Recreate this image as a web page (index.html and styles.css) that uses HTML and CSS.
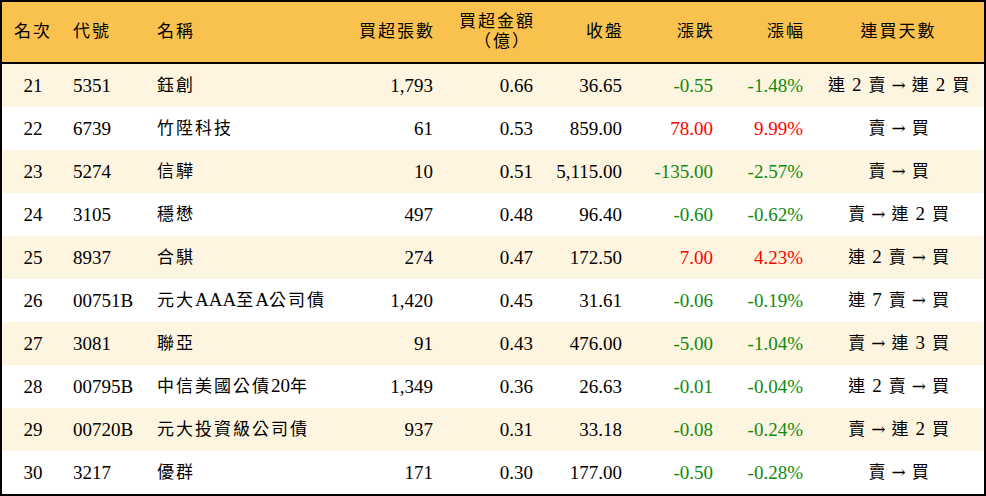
FILE: index.html
```html
<!DOCTYPE html>
<html lang="zh-Hant">
<head>
<meta charset="utf-8">
<title>買超排行</title>
<link rel="stylesheet" href="styles.css">
</head>
<body>
<table class="rank">
  <colgroup>
    <col class="c-rank"><col class="c-code"><col class="c-name"><col class="c-vol"><col class="c-amt"><col class="c-close"><col class="c-chg"><col class="c-pct"><col class="c-days">
  </colgroup>
  <thead>
    <tr>
      <th class="ctr zh">名次</th>
      <th class="lft zh">代號</th>
      <th class="lft zh nm">名稱</th>
      <th class="rgt zh">買超張數</th>
      <th class="rgt zh two"><span class="ln">買超金額</span><span class="ln unit">（億）</span></th>
      <th class="rgt zh">收盤</th>
      <th class="rgt zh">漲跌</th>
      <th class="rgt zh">漲幅</th>
      <th class="ctr zh">連買天數</th>
    </tr>
  </thead>
  <tbody>
    <tr class="alt"><td class="ctr">21</td><td class="lft">5351</td><td class="lft zh nm">鈺創</td><td class="rgt">1,793</td><td class="rgt">0.66</td><td class="rgt">36.65</td><td class="rgt dn">-0.55</td><td class="rgt dn">-1.48%</td><td class="ctr zh days">連<span class="n">2</span>賣<span class="n ar">→</span>連<span class="n">2</span>買</td></tr>
    <tr><td class="ctr">22</td><td class="lft">6739</td><td class="lft zh nm">竹陞科技</td><td class="rgt">61</td><td class="rgt">0.53</td><td class="rgt">859.00</td><td class="rgt up">78.00</td><td class="rgt up">9.99%</td><td class="ctr zh days">賣<span class="n ar">→</span>買</td></tr>
    <tr class="alt"><td class="ctr">23</td><td class="lft">5274</td><td class="lft zh nm">信驊</td><td class="rgt">10</td><td class="rgt">0.51</td><td class="rgt">5,115.00</td><td class="rgt dn">-135.00</td><td class="rgt dn">-2.57%</td><td class="ctr zh days">賣<span class="n ar">→</span>買</td></tr>
    <tr><td class="ctr">24</td><td class="lft">3105</td><td class="lft zh nm">穩懋</td><td class="rgt">497</td><td class="rgt">0.48</td><td class="rgt">96.40</td><td class="rgt dn">-0.60</td><td class="rgt dn">-0.62%</td><td class="ctr zh days">賣<span class="n ar">→</span>連<span class="n">2</span>買</td></tr>
    <tr class="alt"><td class="ctr">25</td><td class="lft">8937</td><td class="lft zh nm">合騏</td><td class="rgt">274</td><td class="rgt">0.47</td><td class="rgt">172.50</td><td class="rgt up">7.00</td><td class="rgt up">4.23%</td><td class="ctr zh days">連<span class="n">2</span>賣<span class="n ar">→</span>買</td></tr>
    <tr><td class="ctr">26</td><td class="lft">00751B</td><td class="lft zh nm">元大<span class="lat">AAA</span>至<span class="lat">A</span>公司債</td><td class="rgt">1,420</td><td class="rgt">0.45</td><td class="rgt">31.61</td><td class="rgt dn">-0.06</td><td class="rgt dn">-0.19%</td><td class="ctr zh days">連<span class="n">7</span>賣<span class="n ar">→</span>買</td></tr>
    <tr class="alt"><td class="ctr">27</td><td class="lft">3081</td><td class="lft zh nm">聯亞</td><td class="rgt">91</td><td class="rgt">0.43</td><td class="rgt">476.00</td><td class="rgt dn">-5.00</td><td class="rgt dn">-1.04%</td><td class="ctr zh days">賣<span class="n ar">→</span>連<span class="n">3</span>買</td></tr>
    <tr><td class="ctr">28</td><td class="lft">00795B</td><td class="lft zh nm">中信美國公債<span class="lat">20</span>年</td><td class="rgt">1,349</td><td class="rgt">0.36</td><td class="rgt">26.63</td><td class="rgt dn">-0.01</td><td class="rgt dn">-0.04%</td><td class="ctr zh days">連<span class="n">2</span>賣<span class="n ar">→</span>買</td></tr>
    <tr class="alt"><td class="ctr">29</td><td class="lft">00720B</td><td class="lft zh nm">元大投資級公司債</td><td class="rgt">937</td><td class="rgt">0.31</td><td class="rgt">33.18</td><td class="rgt dn">-0.08</td><td class="rgt dn">-0.24%</td><td class="ctr zh days">賣<span class="n ar">→</span>連<span class="n">2</span>買</td></tr>
    <tr><td class="ctr">30</td><td class="lft">3217</td><td class="lft zh nm">優群</td><td class="rgt">171</td><td class="rgt">0.30</td><td class="rgt">177.00</td><td class="rgt dn">-0.50</td><td class="rgt dn">-0.28%</td><td class="ctr zh days">賣<span class="n ar">→</span>買</td></tr>
  </tbody>
</table>
</body>
</html>
```
FILE: styles.css
```css
html, body {
  margin: 0;
  padding: 0;
  background: #ffffff;
}

.rank {
  width: 986px;
  table-layout: fixed;
  border-collapse: separate;
  border-spacing: 0;
  border: 2px solid #000;
  font-family: "Liberation Serif", "Noto Sans CJK TC", serif;
  font-size: 19px;
  color: #000;
}

.c-rank { width: 62px; }
.c-code { width: 86px; }
.c-name { width: 195px; }
.c-vol { width: 98px; }
.c-amt { width: 100px; }
.c-close { width: 89px; }
.c-chg { width: 91px; }
.c-pct { width: 90px; }
.c-days { width: 171px; }

.rank th,
.rank td {
  padding: 0 10px 0 0;
  white-space: nowrap;
  overflow: visible;
  vertical-align: middle;
}

.rank thead th {
  height: 60px;
  background: #f9c24f;
  border-bottom: 2px solid #000;
  font-weight: 400;
  line-height: 20px;
}

.rank tbody td {
  height: 43px;
  line-height: 20px;
}

.rank tbody tr.alt td {
  background: #fef5e0;
}

.ctr { text-align: center; padding-right: 0 !important; }
.lft { text-align: left; padding-left: 9px !important; padding-right: 0 !important; }
.lft.nm { padding-left: 7px !important; }
.rgt { text-align: right; }

.zh {
  font-size: 17px;
  letter-spacing: 2px;
}

.rgt.zh {
  padding-right: 8px;
}

.two .ln {
  display: block;
  line-height: 20px;
}

.two .unit {
  margin-right: 4px;
}

.lat {
  font-size: 19px;
  letter-spacing: 0;
}

.days {
  letter-spacing: 0;
}

.days .n {
  font-family: "Liberation Serif", serif;
  font-size: 19px;
  margin: 0 7px;
}

.days .ar {
  font-family: "DejaVu Serif", serif;
  font-size: 17px;
  margin: 0 6px;
}

.dn { color: #0f8a0f; }
.up { color: #ff0000; }
```
